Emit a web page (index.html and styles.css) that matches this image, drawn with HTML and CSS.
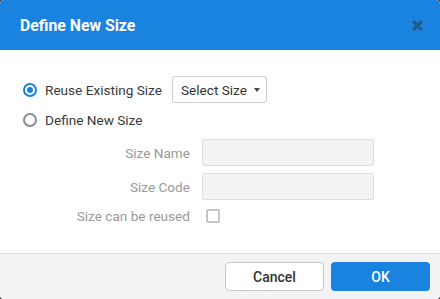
FILE: index.html
```html
<!DOCTYPE html>
<html lang="en">
  <head>
    <meta charset="UTF-8" />
    <meta name="viewport" content="width=device-width, initial-scale=1.0" />
    <title>Define New Size</title>
    <link rel="stylesheet" href="styles.css">
  </head>
  <body>
    <div class="dialog">
      <div class="dialog__header">
        <h2 class="dialog__heading">Define New Size</h2>
        <button class="dialog__close">
          <svg class="dialog__close-icon" viewBox="0 0 12 12">
            <path d="M2 2L10 10M10 2L2 10" />
          </svg>
        </button>
      </div>

      <div class="dialog__body">
        <div class="choice">
          <span class="radio radio--checked"></span>
          <span class="choice__label">Reuse Existing Size</span>
          <button class="picker">
            Select Size
            <span class="picker__caret"></span>
          </button>
        </div>
        <div class="choice choice--second">
          <span class="radio"></span>
          <span class="choice__label">Define New Size</span>
        </div>

        <div class="form">
          <label class="form__label">Size Name</label>
          <span class="form__input"></span>
          <label class="form__label">Size Code</label>
          <span class="form__input"></span>
          <label class="form__label">Size can be reused</label>
          <span class="form__check"><span class="checkbox"></span></span>
        </div>
      </div>

      <div class="dialog__actions">
        <button class="action action--secondary">Cancel</button>
        <button class="action action--primary">OK</button>
      </div>
    </div>
  </body>
</html>
```

FILE: styles.css
```css
* {
  margin: 0;
  padding: 0;
  box-sizing: border-box;
}
body {
  height: 100vh;
  background-color: #3b3b3b;
  font-family: Roboto, "Liberation Sans", sans-serif;
  font-size: 13.6px;
  color: #333;
}
.dialog {
  height: 100%;
  display: flex;
  flex-direction: column;
  border-radius: 4px;
  overflow: hidden;
  background-color: #fff;
}
.dialog__header {
  height: 50px;
  flex-shrink: 0;
  display: flex;
  align-items: center;
  justify-content: space-between;
  padding: 0 16px 0 20px;
  background-color: #1a83e0;
}
.dialog__heading {
  font-size: 15.8px;
  font-weight: 700;
  color: #fff;
}
.dialog__close {
  display: grid;
  place-items: center;
  background: none;
  border: none;
  cursor: pointer;
}
.dialog__close-icon {
  width: 13px;
  height: 13px;
  stroke: #1f5a90;
  stroke-width: 3;
  fill: none;
}
.dialog__body {
  flex: 1;
  padding: 26px 23px 0;
}
.choice {
  display: flex;
  align-items: center;
  height: 27px;
}
.choice--second {
  height: 18px;
  margin-top: 8px;
}
.radio {
  width: 14px;
  height: 14px;
  flex-shrink: 0;
  border-radius: 50%;
  border: 2px solid #8b8a96;
  display: grid;
  place-items: center;
}
.radio--checked {
  border-color: #1a83e0;
}
.radio--checked::after {
  content: "";
  width: 6px;
  height: 6px;
  border-radius: 50%;
  background-color: #1a83e0;
}
.choice__label {
  margin-left: 8px;
  color: #3a3a3a;
}
.picker {
  margin-left: 10px;
  width: 95px;
  height: 27px;
  display: flex;
  align-items: center;
  justify-content: space-between;
  padding: 0 6px 0 8px;
  font: inherit;
  white-space: nowrap;
  color: #333;
  background-color: #fff;
  border: 1px solid #ccc;
  border-radius: 3px;
  cursor: pointer;
}
.picker__caret {
  border-left: 3.5px solid transparent;
  border-right: 3.5px solid transparent;
  border-top: 4px solid #444;
}
.form {
  margin-top: 10px;
  display: grid;
  grid-template-columns: 167px 172px;
  grid-template-rows: 27px 27px 18px;
  column-gap: 12px;
  row-gap: 7px;
  align-items: center;
}
.form__label {
  text-align: right;
  color: #9a9a9a;
}
.form__input {
  height: 27px;
  background-color: #f3f3f3;
  border: 1px solid #dedede;
  border-radius: 2px;
}
.form__check {
  display: flex;
  align-items: center;
}
.checkbox {
  margin-left: 4px;
  width: 14px;
  height: 14px;
  border: 2px solid #c4c4c8;
  border-radius: 2px;
}
.dialog__actions {
  flex-shrink: 0;
  display: flex;
  justify-content: flex-end;
  gap: 7px;
  padding: 8px 10px;
  border-top: 1px solid #dcdcdc;
  background-color: #f3f3f5;
}
.action {
  width: 99px;
  height: 29px;
  font: inherit;
  font-size: 14px;
  font-weight: 500;
  border-radius: 4px;
  cursor: pointer;
}
.action--secondary {
  color: #333;
  background-color: #fff;
  border: 1px solid #c8c8c8;
}
.action--primary {
  color: #fff;
  background-color: #1a83e0;
  border: none;
}
```
